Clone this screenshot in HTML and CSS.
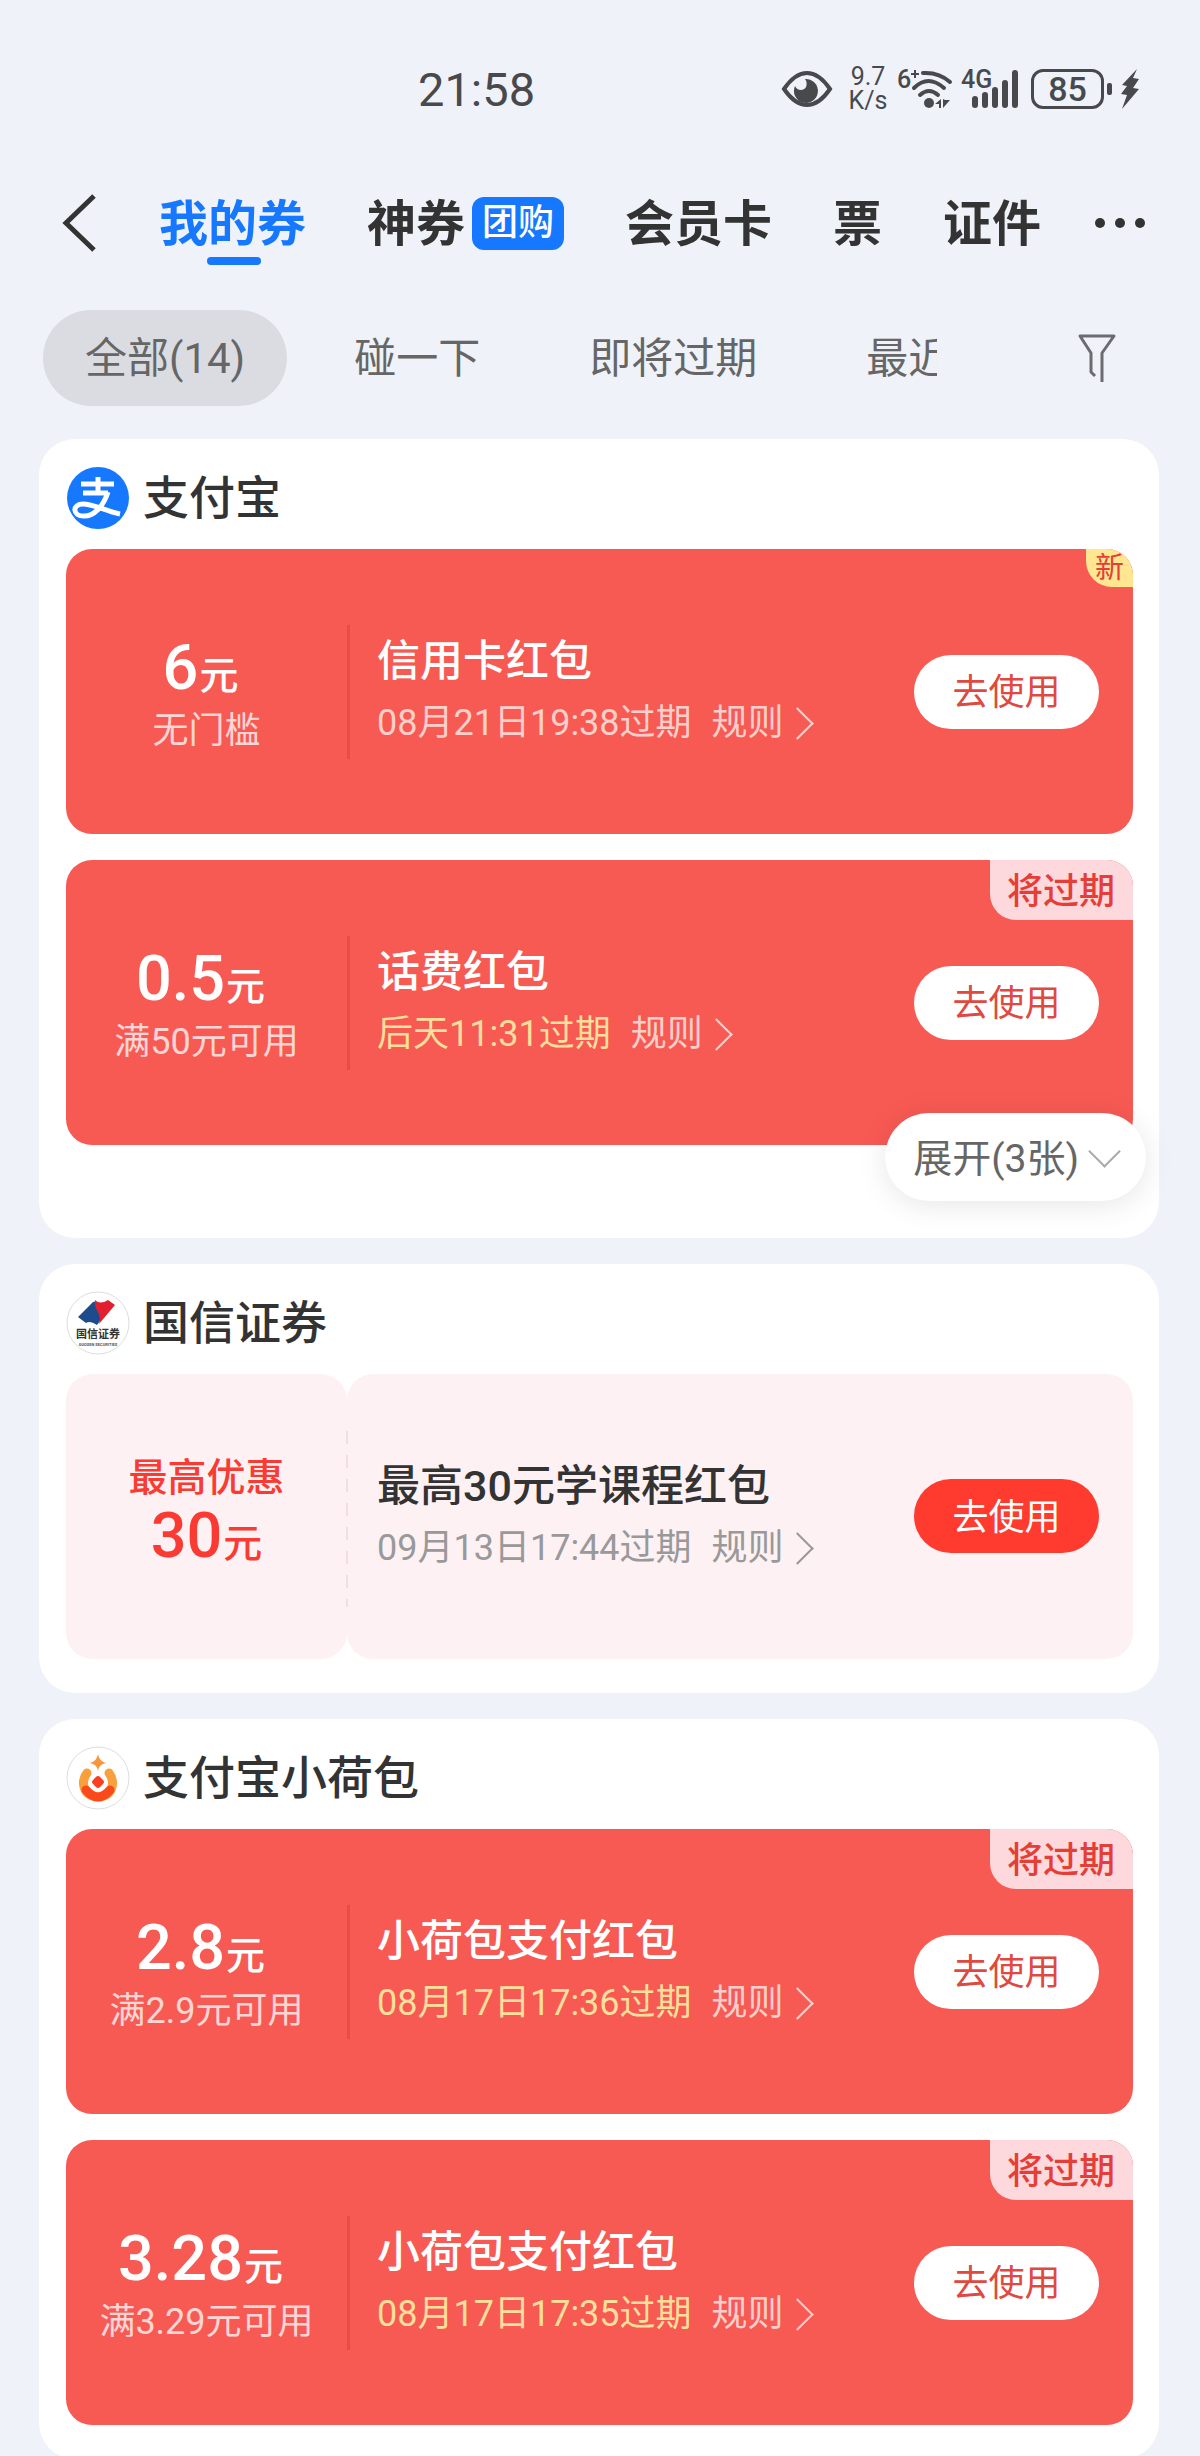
FILE: index.html
```html
<!doctype html>
<html lang="zh-CN">
<head>
    <meta charset="utf-8">
    <title>我的券</title>
    <meta name="viewport" content="width=device-width, initial-scale=1">
    <link rel="stylesheet" href="styles.css">
</head>

<body>

<div class="status-bar">
    <span class="clock">21:58</span>
    <div class="status-icons">
        <svg class="eye" width="52" height="40" viewBox="0 0 52 40">
            <path d="M3 20Q14 4 26 4T49 20Q38 36 26 36T3 20Z" fill="none" stroke="#48494d" stroke-width="4"/>
            <path d="M24 10a12 12 0 1 1-10 7c2 5 9 5 11 1 1-3 1-5-1-8z" fill="#48494d"/>
        </svg>
        <div class="speed">
            <span>9.7</span>
            <span>K/s</span>
        </div>
        <svg class="wifi" width="56" height="42" viewBox="0 0 56 42">
            <text x="-2" y="20" class="tag">6</text>
            <path d="M12 6h8M16 2v8" stroke="#48494d" stroke-width="2"/>
            <g fill="none" stroke="#48494d" stroke-width="4" stroke-linecap="round">
                <path d="M24 5q16-1 27 9"/>
                <path d="M15 20q14-14 30 0"/>
                <path d="M21 27q9-8 18 0"/>
            </g>
            <circle cx="30" cy="35" r="5" fill="#48494d"/>
            <path d="M36 36l6-5v9h-2v-4zM44 31v9l7-8h-5z" fill="#48494d"/>
        </svg>
        <svg class="signal" width="58" height="42" viewBox="0 0 58 42">
            <text x="-3" y="20" class="tag">4G</text>
            <g stroke="#48494d" stroke-width="6" stroke-linecap="round">
                <path d="M11 31v6M21 27v10M31 22v15M41 15v22M51 5v32"/>
            </g>
        </svg>
        <div class="battery">85</div>
        <svg class="bolt" width="20" height="42" viewBox="0 0 20 42">
            <path d="M17 1L2 17l5 1-6 8 6 1-5 14 17-20-6-1 6-9-6-1z" fill="#48494d"/>
        </svg>
    </div>
</div>

<header class="nav">
    <button class="back" aria-label="返回">
        <svg width="36" height="58" viewBox="0 0 36 58">
            <path d="M33 2L5 29l28 27" fill="none" stroke="#333" stroke-width="5"/>
        </svg>
    </button>
    <nav class="tabs">
        <a href="#" class="tab active">我的券</a>
        <a href="#" class="tab">神券<span class="tab-badge">团购</span></a>
        <a href="#" class="tab">会员卡</a>
        <a href="#" class="tab">票</a>
        <a href="#" class="tab">证件</a>
    </nav>
    <button class="more" aria-label="更多">
        <svg width="50" height="10" viewBox="0 0 50 10" fill="#333">
            <circle cx="5" cy="5" r="5"/>
            <circle cx="25" cy="5" r="5"/>
            <circle cx="45" cy="5" r="5"/>
        </svg>
    </button>
</header>

<div class="filters">
    <div class="filter-list">
        <button class="filter selected">全部(14)</button>
        <button class="filter">碰一下</button>
        <button class="filter">即将过期</button>
        <button class="filter">最近领取</button>
    </div>
    <button class="funnel" aria-label="筛选">
        <svg width="40" height="52" viewBox="0 0 40 52">
            <path d="M18 44l-4-4V21L3 4h34L25 21v29" fill="none" stroke="#6b6c6f" stroke-width="3" stroke-linejoin="round"/>
        </svg>
    </button>
</div>

<main class="list">

    <section class="shop shop-folded">
        <h2 class="shop-name">
            <svg width="64" height="64" viewBox="0 0 64 64">
                <circle cx="32" cy="32" r="31" fill="#1677ff"/>
                <g fill="none" stroke="#fff">
                    <path d="M32 11v15M15 18h33M17 27h25" stroke-width="5"/>
                    <path d="M42 26C37 41 28 50 18 50c-12 0-12-12-1-12 11 0 22 7 37 10" stroke-width="5"/>
                </g>
            </svg>
            <span>支付宝</span>
        </h2>

        <article class="coupon">
            <div class="value">
                <p class="amount"><b>6</b>元</p>
                <p class="limit">无门槛</p>
            </div>
            <div class="info">
                <h3>信用卡红包</h3>
                <p>08月21日19:38过期<a href="#" class="rule">规则<i class="arrow"></i></a></p>
            </div>
            <button class="use">去使用</button>
            <span class="flag flag-new">新</span>
        </article>

        <article class="coupon">
            <div class="value">
                <p class="amount"><b>0.5</b>元</p>
                <p class="limit">满50元可用</p>
            </div>
            <div class="info">
                <h3>话费红包</h3>
                <p><em>后天11:31过期</em><a href="#" class="rule">规则<i class="arrow"></i></a></p>
            </div>
            <button class="use">去使用</button>
            <span class="flag">将过期</span>
        </article>

        <button class="expand">展开(3张)<i class="arrow arrow-down"></i></button>
    </section>

    <section class="shop">
        <h2 class="shop-name">
            <svg width="64" height="64" viewBox="0 0 64 64">
                <circle cx="32" cy="32" r="31" fill="#fff" stroke="#ddd"/>
                <path d="M12 26L27 11q5-2 4 4 0 4 3 7 3 5-3 12-7-5-11-2z" fill="#1d4b8c"/>
                <path d="M29 9q5 5 13 0l7 5-16 19q2-7-1-12-4-6-3-12z" fill="#e0202e"/>
                <text x="32" y="47" class="logo-text">国信证券</text>
                <text x="32" y="55" class="logo-sub">GUOSEN SECURITIES</text>
            </svg>
            <span>国信证券</span>
        </h2>

        <article class="coupon light">
            <div class="value">
                <p class="top-offer">最高优惠</p>
                <p class="amount"><b>30</b>元</p>
            </div>
            <div class="info">
                <h3>最高30元学课程红包</h3>
                <p>09月13日17:44过期<a href="#" class="rule">规则<i class="arrow"></i></a></p>
            </div>
            <button class="use">去使用</button>
        </article>
    </section>

    <section class="shop">
        <h2 class="shop-name">
            <svg width="64" height="64" viewBox="0 0 64 64">
                <circle cx="32" cy="32" r="31" fill="#fff" stroke="#ddd"/>
                <path d="M32 8q1 7 8 9-7 1-8 8-1-7-8-8 7-2 8-9z" fill="#f9953a"/>
                <g fill="none" stroke-width="9" stroke-linecap="round">
                    <path d="M21 27c-6 8-5 23 11 24 16-1 17-16 11-24" stroke="#f9a03c"/>
                    <path d="M20 44q12 14 24 0" stroke="#fa4a1c"/>
                </g>
                <rect x="27" y="31" width="10" height="10" rx="3" transform="rotate(45 32 36)" fill="#fa4020"/>
            </svg>
            <span>支付宝小荷包</span>
        </h2>

        <article class="coupon">
            <div class="value">
                <p class="amount"><b>2.8</b>元</p>
                <p class="limit">满2.9元可用</p>
            </div>
            <div class="info">
                <h3>小荷包支付红包</h3>
                <p><em>08月17日17:36过期</em><a href="#" class="rule">规则<i class="arrow"></i></a></p>
            </div>
            <button class="use">去使用</button>
            <span class="flag">将过期</span>
        </article>

        <article class="coupon">
            <div class="value">
                <p class="amount"><b>3.28</b>元</p>
                <p class="limit">满3.29元可用</p>
            </div>
            <div class="info">
                <h3>小荷包支付红包</h3>
                <p><em>08月17日17:35过期</em><a href="#" class="rule">规则<i class="arrow"></i></a></p>
            </div>
            <button class="use">去使用</button>
            <span class="flag">将过期</span>
        </article>
    </section>

</main>

</body>
</html>
```

FILE: styles.css
```css
* {
    box-sizing: border-box;
}

html {
    scrollbar-width: none;
}

body {
    margin: 0;
    background: #eff2f8;
    color: #333;
    font-family: Roboto, "Noto Sans CJK SC", sans-serif;
    font-size: 36px;
}

h2, h3, p {
    margin: 0;
    font-weight: 500;
}

a {
    color: inherit;
    text-decoration: none;
}

button {
    padding: 0;
    border: 0;
    background: none;
    color: inherit;
    font: inherit;
    white-space: nowrap;
    cursor: pointer;
}

svg {
    display: block;
    flex: none;
    overflow: visible;
}

/* status bar */
.status-bar {
    display: flex;
    align-items: center;
    justify-content: space-between;
    height: 178px;
    padding: 0 60px 0 418px;
    color: #48494d;
}

.clock {
    font-size: 47px;
}

.status-icons {
    display: flex;
    align-items: center;
}

.speed {
    display: flex;
    flex-direction: column;
    width: 42px;
    margin: 0 10px 0 14px;
    font-size: 25px;
    line-height: 24px;
    text-align: center;
}

.tag {
    font-size: 25px;
    font-weight: 500;
    fill: #48494d;
}

.wifi {
    margin-right: 9px;
}

.signal {
    margin-right: 9px;
}

.battery {
    position: relative;
    width: 73px;
    height: 40px;
    margin-right: 16px;
    border: 3px solid #48494d;
    border-radius: 12px;
    font-size: 34px;
    font-weight: 500;
    line-height: 35px;
    text-align: center;
}

.battery::after {
    content: "";
    position: absolute;
    top: 11px;
    right: -11px;
    width: 5px;
    height: 12px;
    border-radius: 2px;
    background: #48494d;
}

/* top tabs */
.nav {
    display: flex;
    align-items: center;
    height: 90px;
    padding: 0 55px 0 61px;
}

.tabs {
    display: flex;
    flex: 1;
    gap: 61px;
    height: 100%;
    margin-left: 62px;
}

.tab {
    position: relative;
    display: flex;
    align-items: center;
    padding-bottom: 8px;
    font-size: 49px;
    font-weight: 700;
    white-space: nowrap;
}

.tab.active {
    color: #1677ff;
}

.tab.active::after {
    content: "";
    position: absolute;
    bottom: 3px;
    left: 50%;
    width: 54px;
    height: 8px;
    margin-left: -26px;
    border-radius: 4px;
    background: #1677ff;
}

.tab-badge {
    margin: 8px 0 0 7px;
    padding: 0 10px;
    border-radius: 12px;
    background: #1677ff;
    color: #fff;
    font-size: 36px;
    font-weight: 500;
    line-height: 53px;
}

/* filters */
.filters {
    display: flex;
    align-items: center;
    justify-content: space-between;
    margin: 42px 0 33px;
    padding: 0 83px 0 43px;
}

.filter-list {
    display: flex;
    flex: 1;
    gap: 25px;
    margin-right: 140px;
    overflow: hidden;
}

.filter {
    flex: none;
    height: 96px;
    padding: 0 42px 8px;
    border-radius: 48px;
    color: #666;
    font-size: 42px;
}

.filter.selected {
    background: #dadce1;
}

/* shop cards */
.list {
    display: flex;
    flex-direction: column;
    gap: 26px;
    padding: 0 41px 0 39px;
}

.shop {
    position: relative;
    display: flex;
    flex-direction: column;
    gap: 26px;
    padding: 27px 26px 34px 27px;
    border-radius: 36px;
    background: #fff;
}

.shop-folded {
    padding-bottom: 93px;
}

.shop-name {
    display: flex;
    align-items: center;
    gap: 13px;
    height: 64px;
    margin-bottom: -7px;
    font-size: 46px;
}

.shop-name span {
    padding-bottom: 8px;
}

.logo-text {
    font-size: 11px;
    font-weight: 700;
    text-anchor: middle;
    fill: #333;
}

.logo-sub {
    font-size: 4px;
    font-weight: 700;
    text-anchor: middle;
    fill: #555;
}

/* coupon */
.coupon {
    position: relative;
    display: flex;
    align-items: center;
    height: 285px;
    padding-right: 34px;
    border-radius: 26px;
    background: #f75a53;
    color: #fff;
    overflow: hidden;
}

.value {
    flex: none;
    width: 281px;
    padding-top: 10px;
    text-align: center;
}

.amount {
    margin-right: 12px;
    font-size: 39px;
    line-height: 60px;
}

.amount b {
    margin-right: 1px;
    font-size: 63px;
    font-weight: 500;
}

.limit {
    font-weight: 400;
    line-height: 50px;
    opacity: .75;
}

.info {
    flex: 1;
    padding-left: 27px;
    border-left: 3px solid #e94b46;
}

.info h3 {
    font-size: 43px;
    line-height: 72px;
}

.info p {
    color: #fdcfcb;
    font-weight: 400;
    line-height: 52px;
    padding-bottom: 10px;
}

.info em {
    color: #ffdf9b;
    font-style: normal;
}

.rule {
    margin-left: 20px;
}

.arrow {
    display: inline-block;
    width: 23px;
    height: 23px;
    margin-left: 2px;
    border-top: 2px solid;
    border-right: 2px solid;
    transform: rotate(45deg);
}

.arrow-down {
    margin: 0 0 10px 14px;
    color: #aaa;
    transform: rotate(135deg);
}

.use {
    width: 185px;
    height: 74px;
    padding-bottom: 5px;
    border-radius: 37px;
    background: #fff;
    color: #e0493f;
}

.flag {
    position: absolute;
    top: 0;
    right: 0;
    padding: 4px 18px 0 17px;
    border-bottom-left-radius: 26px;
    background: #fdd8dc;
    color: #e53e37;
    font-weight: 500;
    line-height: 56px;
}

.flag-new {
    padding: 0 9px;
    background: #ffe691;
    font-size: 29px;
    font-weight: 400;
    line-height: 38px;
}

/* pale coupon, two halves joined by a dashed line */
.light {
    background: none;
    color: #333;
    align-items: stretch;
    padding: 0;
}

.light .value,
.light .info {
    display: flex;
    flex-direction: column;
    justify-content: center;
    border: 0;
    border-radius: 26px;
    background: #fdf1f4;
}

.light .value {
    padding: 0 0 10px;
    color: #f93b33;
}

.light .info {
    padding-left: 30px;
}

.light .info p {
    color: #999;
}

.light .amount {
    margin: 0;
}

.light::before {
    content: "";
    position: absolute;
    top: 57px;
    bottom: 52px;
    left: 280px;
    width: 2px;
    background: repeating-linear-gradient(#f3dfe2 0 13px, transparent 13px 24px);
}

.top-offer {
    font-size: 39px;
    line-height: 56px;
}

.light .use {
    position: absolute;
    top: 105px;
    right: 34px;
    background: #ff3b30;
    color: #fff;
}

.expand {
    position: absolute;
    right: 13px;
    bottom: 37px;
    display: flex;
    align-items: center;
    height: 88px;
    padding: 0 30px 5px 28px;
    border-radius: 44px;
    background: #fff;
    box-shadow: 0 4px 30px rgba(0, 0, 0, .1);
    color: #666;
    font-size: 39px;
}

.expand .arrow-down {
    margin-bottom: 7px;
}
```
